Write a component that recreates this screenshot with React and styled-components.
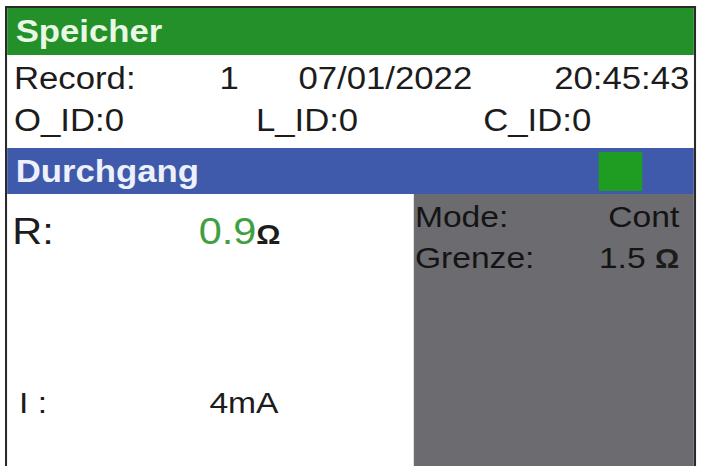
import React from "react";
import styled, { createGlobalStyle } from "styled-components";

const Global = createGlobalStyle`
  html, body {
    margin: 0;
    padding: 0;
    overflow: hidden;
    background: #ffffff;
    font-family: "Liberation Sans", Arial, sans-serif;
  }
`;

const Wrapper = styled.div`
  padding: 6px 0 0 5px;
  height: 467px;
  box-sizing: border-box;
`;

/* the device display is horizontally stretched in the photo */
const Screen = styled.div`
  width: 617px;
  box-sizing: border-box;
  border: 2px solid #2a2a2a;
  border-bottom: none;
  background: #ffffff;
  transform: scaleX(1.12);
  transform-origin: 0 0;
  color: #1c1c1c;
`;

const Header = styled.div`
  height: 47px;
  line-height: 48px;
  background: #23902a;
  color: #e9f8e4;
  font-weight: bold;
  font-size: 31px;
  padding-left: 7.5px;
`;

const Info = styled.div`
  padding: 3px 4px 6px 6px;
  background: #ffffff;
`;

const Row = styled.div`
  display: flex;
  height: 42px;
  line-height: 42px;
  font-size: 31px;
  white-space: nowrap;
`;

const Cell = styled.span`
  flex: ${(p) => (p.$w ? `0 0 ${p.$w}px` : "1 1 auto")};
  text-align: ${(p) => (p.$right ? "right" : "left")};
`;

const TitleBar = styled.div`
  height: 46px;
  display: flex;
  align-items: center;
  justify-content: space-between;
  background: #3f5aab;
  padding: 0 46px 0 7.5px;
`;

const Title = styled.span`
  color: #eef1fb;
  font-weight: bold;
  font-size: 31px;
  line-height: 46px;
  padding-top: 1px;
`;

const Indicator = styled.div`
  width: 39px;
  height: 39px;
  background: #1f9c22;
`;

const Body = styled.div`
  display: flex;
  height: 272px;
`;

const LeftPanel = styled.div`
  flex: 0 0 363px;
  background: #ffffff;
  display: flex;
  flex-direction: column;
`;

const MeasureRow = styled.div`
  display: flex;
  align-items: baseline;
  white-space: nowrap;
  font-size: ${(p) => p.$size}px;
  line-height: ${(p) => p.$line}px;
  padding-left: ${(p) => p.$pad}px;
  margin-top: ${(p) => p.$top}px;
`;

const Label = styled.span`
  flex: 0 0 ${(p) => p.$w}px;
`;

const Value = styled.span`
  color: ${(p) => p.$color || "#1c1c1c"};
`;

const Unit = styled.span`
  font-size: 27px;
  font-weight: bold;
  color: #1c1c1c;
`;

const RightPanel = styled.div`
  flex: 1 1 auto;
  background: #6b6b70;
  padding: 2px 13px 0 1px;
  color: #141414;
`;

const SettingRow = styled.div`
  display: flex;
  justify-content: space-between;
  align-items: baseline;
  font-size: 30px;
  line-height: 41px;
  white-space: nowrap;
`;

export default function App() {
  return (
    <>
      <Global />
      <Wrapper>
        <Screen>
          <Header>Speicher</Header>
          <Info>
            <Row>
              <Cell $w={183.5}>Record:</Cell>
              <Cell $w={70.5}>1</Cell>
              <Cell>07/01/2022</Cell>
              <Cell $right>20:45:43</Cell>
            </Row>
            <Row>
              <Cell $w={216}>O_ID:0</Cell>
              <Cell $w={203}>L_ID:0</Cell>
              <Cell>C_ID:0</Cell>
            </Row>
          </Info>
          <TitleBar>
            <Title>Durchgang</Title>
            <Indicator />
          </TitleBar>
          <Body>
            <LeftPanel>
              <MeasureRow $size={37} $line={44} $pad={4.5} $top={16}>
                <Label $w={166.5}>R:</Label>
                <Value $color="#3f9f41">0.9</Value>
                <Unit>Ω</Unit>
              </MeasureRow>
              <MeasureRow $size={30} $line={40} $pad={10.5} $top={126}>
                <Label $w={170}>I :</Label>
                <Value>4mA</Value>
              </MeasureRow>
            </LeftPanel>
            <RightPanel>
              <SettingRow>
                <span>Mode:</span>
                <span>Cont</span>
              </SettingRow>
              <SettingRow>
                <span>Grenze:</span>
                <span>
                  1.5 <Unit>Ω</Unit>
                </span>
              </SettingRow>
            </RightPanel>
          </Body>
        </Screen>
      </Wrapper>
    </>
  );
}
